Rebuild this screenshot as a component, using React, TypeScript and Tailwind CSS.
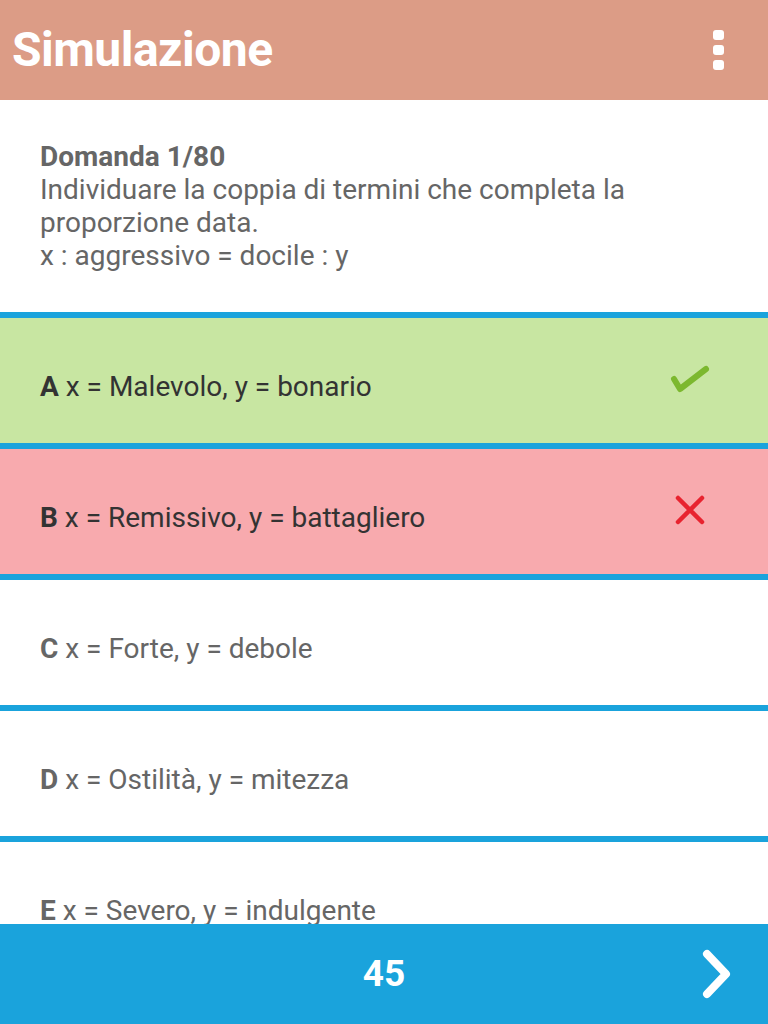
type Option = { id: string; text: string; state?: 'right' | 'wrong' }

const OPTIONS: Option[] = [
  { id: 'A', text: 'x = Malevolo, y = bonario', state: 'right' },
  { id: 'B', text: 'x = Remissivo, y = battagliero', state: 'wrong' },
  { id: 'C', text: 'x = Forte, y = debole' },
  { id: 'D', text: 'x = Ostilità, y = mitezza' },
  { id: 'E', text: 'x = Severo, y = indulgente' },
]

function Kebab() {
  return (
    <div className="flex flex-col gap-[5px]">
      <span className="w-[11px] h-[10px] rounded-[3px] bg-white" />
      <span className="w-[11px] h-[10px] rounded-[3px] bg-white" />
      <span className="w-[11px] h-[10px] rounded-[3px] bg-white" />
    </div>
  )
}

function OptionRow({ opt }: { opt: Option }) {
  const bg =
    opt.state === 'right' ? 'bg-[#c8e6a2]' : opt.state === 'wrong' ? 'bg-[#f8aaae]' : 'bg-white'
  const text = opt.state ? 'text-[#333333]' : 'text-[#666666]'

  return (
    <div className={`border-t-[6px] border-[#1aa3dc] ${bg}`}>
      <div className="h-[125px] flex items-center justify-between pl-10 pr-[58px] pt-3">
        <span className={`text-[28px] leading-8 ${text}`}>
          <b>{opt.id}</b> {opt.text}
        </span>
        <div className="w-10 flex justify-center -mt-4">
          {opt.state === 'right' && (
            <svg width="40" height="32" viewBox="0 0 40 32">
              <path d="M4 16 L10 26 L36 6" fill="none" stroke="#7cb82f" strokeWidth="6" strokeLinecap="round" strokeLinejoin="round" />
            </svg>
          )}
          {opt.state === 'wrong' && (
            <svg width="32" height="32" viewBox="0 0 32 32">
              <path d="M4 4 L28 28 M28 4 L4 28" fill="none" stroke="#e8232f" strokeWidth="4.5" strokeLinecap="round" />
            </svg>
          )}
        </div>
      </div>
    </div>
  )
}

export default function App() {
  return (
    <div className="w-[768px] h-[1024px] flex flex-col bg-white overflow-hidden font-['Roboto',sans-serif]">
      {/* Header */}
      <header className="h-[100px] shrink-0 bg-[#dc9c86] flex items-center justify-between pl-3 pr-[44px]">
        <h1 className="text-[48px] font-bold text-white tracking-[-0.5px]">Simulazione</h1>
        <Kebab />
      </header>

      {/* Content */}
      <main className="flex-1 overflow-hidden">
        <section className="pl-10 pr-6 pt-[40px] pb-[40px] text-[28px] leading-[33px] text-[#666666]">
          <div className="font-bold">Domanda 1/80</div>
          <div>Individuare la coppia di termini che completa la proporzione data.</div>
          <div>x : aggressivo = docile : y</div>
        </section>
        {OPTIONS.map((o) => (
          <OptionRow key={o.id} opt={o} />
        ))}
      </main>

      {/* Footer */}
      <footer className="h-[100px] shrink-0 bg-[#1aa3dc] flex items-center justify-center relative">
        <span className="text-[37px] font-bold text-white">45</span>
        <svg width="40" height="52" viewBox="0 0 40 52" className="absolute right-[30px] top-[24px]">
          <path d="M9 6 L28 26 L9 46" fill="none" stroke="white" strokeWidth="8" strokeLinecap="round" strokeLinejoin="round" />
        </svg>
      </footer>
    </div>
  )
}
